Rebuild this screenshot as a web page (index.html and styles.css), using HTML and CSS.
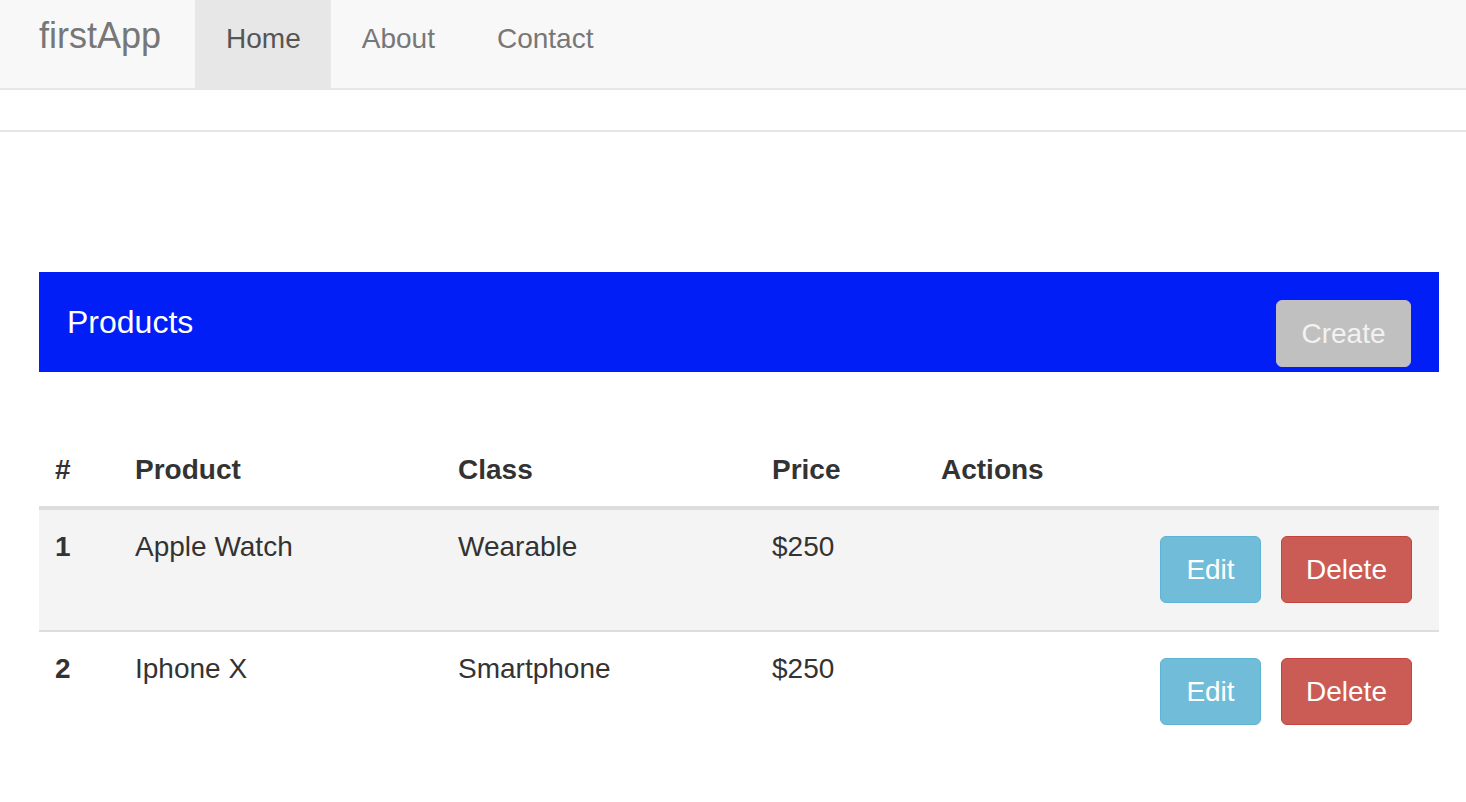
FILE: index.html
```html
<!DOCTYPE html>
<html>
<head>
<meta charset="utf-8">
<title>firstApp</title>
<link rel="stylesheet" href="styles.css">
</head>
<body>
<nav class="navbar">
  <a class="brand" href="#">firstApp</a>
  <ul class="nav-links">
    <li><a class="active" href="#">Home</a></li>
    <li><a href="#">About</a></li>
    <li><a href="#">Contact</a></li>
  </ul>
</nav>
<div class="divider"></div>
<main class="container">
  <div class="panel-heading">
    <h3 class="panel-title">Products</h3>
    <button class="btn btn-create">Create</button>
  </div>
  <table class="table">
    <colgroup>
      <col class="c-num"><col class="c-product"><col class="c-class"><col class="c-price"><col>
    </colgroup>
    <thead>
      <tr><th>#</th><th>Product</th><th>Class</th><th>Price</th><th>Actions</th></tr>
    </thead>
    <tbody>
      <tr class="striped">
        <th>1</th><td>Apple Watch</td><td>Wearable</td><td>$250</td>
        <td><div class="actions"><button class="btn btn-edit">Edit</button><button class="btn btn-delete">Delete</button></div></td>
      </tr>
      <tr>
        <th>2</th><td>Iphone X</td><td>Smartphone</td><td>$250</td>
        <td><div class="actions"><button class="btn btn-edit">Edit</button><button class="btn btn-delete">Delete</button></div></td>
      </tr>
    </tbody>
  </table>
</main>
</body>
</html>
```

FILE: styles.css
```css
* { box-sizing: border-box; }
body {
  margin: 0;
  font-family: "Liberation Sans", Helvetica, Arial, sans-serif;
  font-size: 28px;
  line-height: 40px;
  color: #333;
  background: #fff;
}
.navbar {
  display: flex;
  height: 90px;
  background: #f8f8f8;
  border-bottom: 2px solid #e7e7e7;
}
.brand {
  display: block;
  padding: 16px 34px 0 39px;
  font-size: 36px;
  line-height: 40px;
  color: #777;
  text-decoration: none;
}
.nav-links {
  display: flex;
  margin: 0;
  padding: 0;
  list-style: none;
}
.nav-links a {
  display: block;
  height: 88px;
  padding: 19px 31px 0 31px;
  font-size: 28px;
  line-height: 40px;
  color: #777;
  text-decoration: none;
}
.nav-links a.active {
  background: #e7e7e7;
  color: #555;
  padding-right: 30px;
}
.divider {
  margin-top: 40px;
  border-top: 2px solid #e5e5e5;
}
.container {
  width: 1400px;
  margin: 140px 0 0 39px;
}
.panel-heading {
  display: flex;
  justify-content: space-between;
  align-items: flex-start;
  height: 100px;
  padding: 0 28px;
  background: #001ef5;
}
.panel-title {
  margin: 0;
  font-size: 32px;
  font-weight: normal;
  line-height: 100px;
  color: #fff;
}
.btn {
  font-family: inherit;
  font-size: 28px;
  line-height: 40px;
  padding: 12px 0;
  border: 1px solid transparent;
  border-radius: 6px;
  color: #fff;
  text-align: center;
  cursor: pointer;
}
.btn-create {
  margin-top: 28px;
  width: 135px;
  height: 67px;
  background: #c0c0c0;
  border-color: #c0c0c0;
  color: #f2f2f2;
}
.table {
  width: 100%;
  margin-top: 62px;
  border-collapse: collapse;
  table-layout: fixed;
}
.c-num { width: 80px; }
.c-product { width: 323px; }
.c-class { width: 314px; }
.c-price { width: 169px; }
.table th, .table td {
  padding: 17px 16px 16px;
  text-align: left;
  vertical-align: top;
}
.table thead th {
  padding: 16px 16px 16px;
  border-bottom: 4px solid #ddd;
  font-weight: bold;
}
.table tbody th { font-weight: bold; }
.table tbody tr + tr th,
.table tbody tr + tr td { border-top: 2px solid #ddd; }
.table tr.striped { background: #f4f4f4; }
.table td:last-child { padding: 16px 27px 16px 16px; }
.actions {
  display: flex;
  justify-content: flex-end;
  gap: 20px;
  margin: 10px 0 11px;
}
.btn-edit {
  width: 101px;
  height: 67px;
  background: #71bdd9;
  border-color: #5fb4d6;
}
.btn-delete {
  width: 131px;
  height: 67px;
  background: #cb5c55;
  border-color: #c2443d;
}
```
